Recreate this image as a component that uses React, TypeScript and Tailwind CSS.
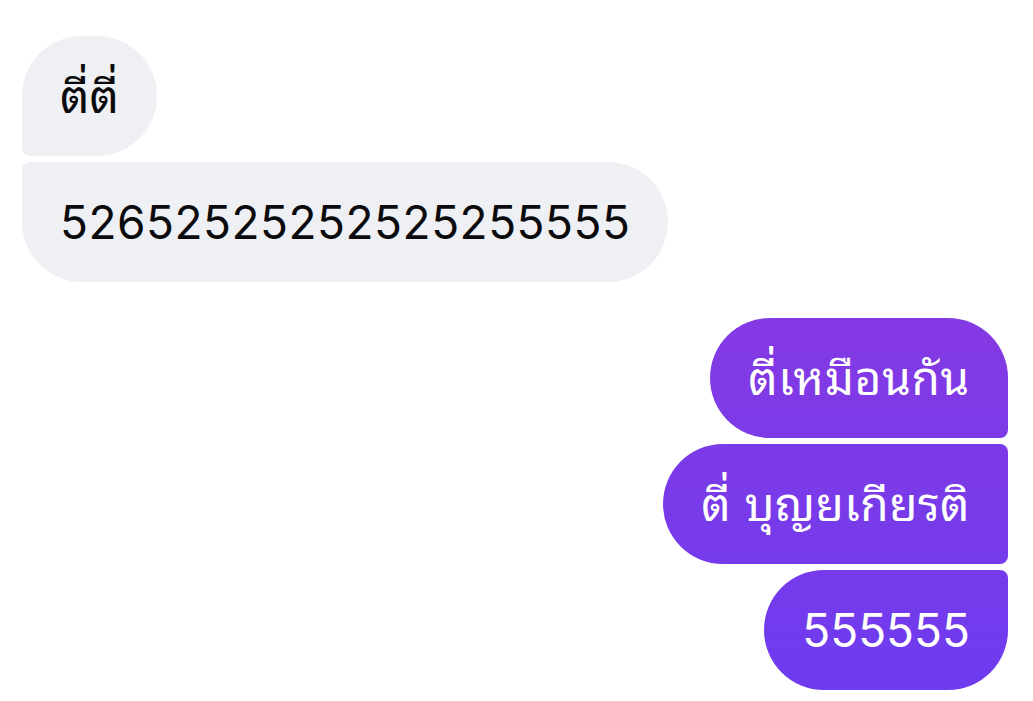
const font = { fontFamily: '"Inter", "Noto Sans Thai Looped", "Noto Sans Thai", "Noto Sans", sans-serif' };

type Msg = { text: string; side: "in" | "out"; shape: string; extra?: string };

const messages: Msg[] = [
  { text: "ตี่ตี่", side: "in", shape: "rounded-[60px] rounded-bl-[8px]" },
  { text: "52652525252525255555", side: "in", shape: "rounded-[60px] rounded-tl-[8px]", extra: "tracking-[0.5px]" },
  { text: "ตี่เหมือนกัน", side: "out", shape: "rounded-[60px] rounded-br-[8px]", extra: "tracking-[0.7px]" },
  { text: "ตี่ บุญยเกียรติ", side: "out", shape: "rounded-[60px] rounded-tr-[8px] rounded-br-[8px]", extra: "tracking-[0.5px]" },
  { text: "555555", side: "out", shape: "rounded-[60px] rounded-tr-[8px]" },
];

const Bubble = ({ msg }: { msg: Msg }) => {
  const isOut = msg.side === "out";
  return (
    <div className={`flex ${isOut ? "justify-end" : "justify-start"}`}>
      <div
        className={`flex h-[120px] items-center px-[38px] text-[46px] leading-none ${msg.shape} ${
          isOut
            ? "bg-fixed bg-linear-to-b from-[#8439e3] from-45% to-[#6e3bef] to-98% text-white"
            : "bg-[#eff0f4] text-[#0b0b0d]"
        }`}
      >
        <span className={`whitespace-nowrap ${msg.extra ?? ""}`}>{msg.text}</span>
      </div>
    </div>
  );
};

export default function App() {
  const incoming = messages.filter((m) => m.side === "in");
  const outgoing = messages.filter((m) => m.side === "out");
  return (
    <div className="min-h-screen bg-white pl-[22px] pr-[25px] pt-[36px]" style={font}>
      <div className="flex flex-col gap-[6px]">
        {incoming.map((m, i) => (
          <Bubble key={i} msg={m} />
        ))}
      </div>
      <div className="mt-[36px] flex flex-col gap-[6px]">
        {outgoing.map((m, i) => (
          <Bubble key={i} msg={m} />
        ))}
      </div>
    </div>
  );
}
